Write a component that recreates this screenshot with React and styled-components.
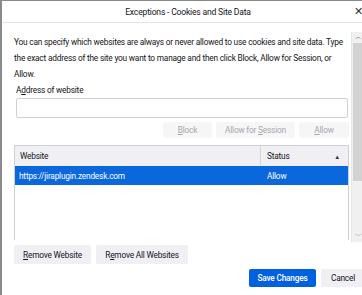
import React from 'react'
import styled, { createGlobalStyle } from 'styled-components'

const Global = createGlobalStyle`
  html, body {
    margin: 0;
    padding: 0;
    background: #fff;
    overflow: hidden;
  }
  body {
    font-family: Roboto, "Open Sans", sans-serif;
    color: #15141a;
    letter-spacing: -0.2px;
  }
`

const Frame = styled.div`
  width: 362px;
  height: 295px;
  overflow: hidden;
  background: #8a8a8a;
  padding: 1px 0 0 2px;
  box-sizing: border-box;
`

const Dialog = styled.div`
  width: 366px;
  height: 294px;
  background: #fff;
  display: flex;
  flex-direction: column;
`

const TitleBar = styled.div`
  height: 21px;
  flex: none;
  display: grid;
  grid-template-columns: 1fr auto 1fr;
  align-items: center;
  border-bottom: 1px solid #e3e3e3;
  font-size: 8.6px;
`

const Title = styled.div`
  grid-column: 2;
  padding-left: 6px;
`

const Close = styled.div`
  grid-column: 3;
  justify-self: end;
  margin-right: 5px;
  font-size: 11px;
  color: #333;
`

const ScrollArea = styled.div`
  display: flex;
  height: 219px;
  flex: none;
  overflow: hidden;
`

const Content = styled.div`
  flex: 1;
  padding: 11px 0 0 12px;
  min-width: 0;
`

const Scrollbar = styled.div`
  width: 12px;
  margin-top: 9px;
  margin-right: 4px;
  background: #f0f0f0;
  display: flex;
  flex-direction: column;
  align-items: center;
  border-left: 1px solid #e6e6e6;
`

const Arrow = styled.div`
  height: 8px;
  font-size: 7px;
  line-height: 8px;
  color: #666;
  margin: ${p => (p.down ? 'auto 0 2px' : '1px 0 0')};
`

const Thumb = styled.div`
  width: 10px;
  height: 138px;
  margin-top: 2px;
  background: #d2d2d2;
`

const Intro = styled.p`
  margin: 0;
  width: 334px;
  font-size: 8.3px;
  line-height: 16px;
`

const Label = styled.div`
  font-size: 8.3px;
  line-height: 16px;
  padding-left: 2px;
`

const Input = styled.div`
  width: 330px;
  height: 18px;
  margin-left: 2px;
  border: 1px solid #cfcfd8;
  border-radius: 2px;
`

const ActionRow = styled.div`
  display: flex;
  justify-content: flex-end;
  gap: 4px;
  width: 335px;
  margin-top: 4px;
`

const Button = styled.div`
  height: ${p => (p.h || 16)}px;
  padding: 0 6px;
  display: flex;
  align-items: center;
  justify-content: center;
  box-sizing: border-box;
  font-size: 8.3px;
  white-space: nowrap;
  border-radius: 2px;
  background: ${p => (p.primary ? '#0061e0' : p.disabled ? '#f6f6f7' : '#f0f0f4')};
  color: ${p => (p.primary ? '#fff' : p.disabled ? '#a7a7ac' : '#15141a')};
  font-weight: ${p => (p.primary ? 500 : 400)};
  min-width: ${p => (p.w ? p.w + 'px' : 'auto')};
`

const Table = styled.div`
  width: 333px;
  height: 94px;
  margin-top: 7px;
  border: 1px solid #cfcfd8;
  border-bottom: none;
`

const Row = styled.div`
  display: grid;
  grid-template-columns: 245px 1fr;
  height: ${p => (p.head ? 20 : 19)}px;
  align-items: center;
  font-size: 8.3px;
  background: ${p => (p.head ? '#f0f0f4' : p.selected ? '#0b67dc' : '#fff')};
  color: ${p => (p.selected ? '#fff' : '#15141a')};
`

const Cell = styled.div`
  display: flex;
  align-items: center;
  height: 100%;
  padding-left: ${p => (p.pl || 5)}px;
  border-left: ${p => (p.divider ? '1px solid #d6d6dc' : 'none')};
  justify-content: space-between;
  padding-right: 8px;
`

const Sort = styled.span`
  font-size: 6px;
  color: #333;
`

const Footer = styled.div`
  flex: none;
  padding: 3px 0 0 12px;
`

const FooterRow = styled.div`
  display: flex;
  gap: 5px;
`

const DialogButtons = styled.div`
  display: flex;
  gap: 5px;
  margin-top: 5px;
  padding-left: 235px;
`

const Key = styled.u`
  text-underline-offset: 1px;
`

const underline = (word, i) => (
  <>
    {word.slice(0, i)}
    <Key>{word[i]}</Key>
    {word.slice(i + 1)}
  </>
)

export default function App() {
  return (
    <>
      <Global />
      <Frame>
        <Dialog>
          <TitleBar>
            <Title>Exceptions - Cookies and Site Data</Title>
            <Close>✕</Close>
          </TitleBar>
          <ScrollArea>
            <Content>
              <Intro>
                You can specify which websites are always or never allowed to use cookies and site data. Type
                the exact address of the site you want to manage and then click Block, Allow for Session, or
                Allow.
              </Intro>
              <Label>A{underline('ddress', 0)} of website</Label>
              <Input />
              <ActionRow>
                <Button disabled w={49}><span>{underline('Block', 0)}</span></Button>
                <Button disabled w={79}><span>Allow for {underline('Session', 0)}</span></Button>
                <Button disabled w={50}><span>{underline('Allow', 0)}</span></Button>
              </ActionRow>
              <Table>
                <Row head>
                  <Cell>Website</Cell>
                  <Cell divider pl={6}>
                    Status<Sort>▲</Sort>
                  </Cell>
                </Row>
                <Row selected>
                  <Cell pl={4}>https://jiraplugin.zendesk.com</Cell>
                  <Cell pl={7}>Allow</Cell>
                </Row>
              </Table>
            </Content>
            <Scrollbar>
              <Arrow>︿</Arrow>
              <Thumb />
              <Arrow down>﹀</Arrow>
            </Scrollbar>
          </ScrollArea>
          <Footer>
            <FooterRow>
              <Button h={19} w={77}><span>{underline('Remove Website', 0)}</span></Button>
              <Button h={19} w={92}><span>{underline('Remove', 1)} All Websites</span></Button>
            </FooterRow>
            <DialogButtons>
              <Button primary h={18} w={67}>Save Changes</Button>
              <Button h={18} w={44}>Cancel</Button>
            </DialogButtons>
          </Footer>
        </Dialog>
      </Frame>
    </>
  )
}
